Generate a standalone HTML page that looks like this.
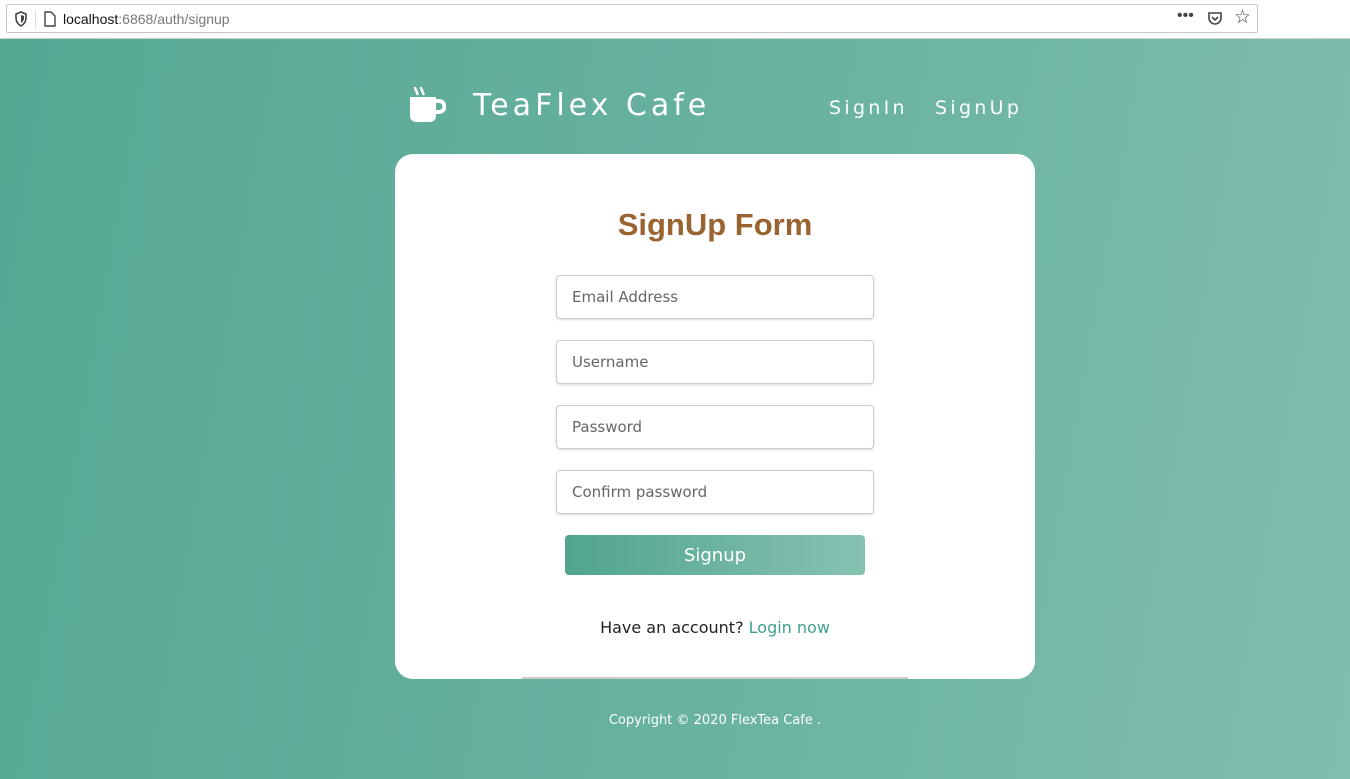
<!DOCTYPE html>
<html><head><meta charset="utf-8"><style>
*{margin:0;padding:0;box-sizing:border-box}
body{width:1350px;height:779px;overflow:hidden;font-family:"Liberation Sans",sans-serif;position:relative;background:#fff}
.bar{position:absolute;left:0;top:0;width:1350px;height:39px;background:#fff;border-bottom:1px solid #d0d0d0}
.url{position:absolute;left:6px;top:4px;width:1252px;height:29px;border:1px solid #c8c8c8;border-radius:2px;background:#fff}
.main{position:absolute;left:0;top:39px;width:1350px;height:740px;background:linear-gradient(100deg,#55a893 0%,#67b19f 50%,#80bfae 100%)}
.t{position:absolute;color:#fff;font-family:"DejaVu Sans","Liberation Sans",sans-serif}
.card{position:absolute;left:395px;top:154px;width:640px;height:525px;background:#fff;border-radius:18px}
.in{position:absolute;left:556px;width:318px;height:44px;border:1px solid #ccc;border-radius:4px;box-shadow:0 1px 2px rgba(0,0,0,.15);color:#666;padding:12px 15px;font-family:"DejaVu Sans",sans-serif;font-size:15px}
</style></head><body>
<div class="bar"><div class="url">
<svg style="position:absolute;left:7px;top:6px" width="14" height="16" viewBox="0 0 14 16"><path d="M7 1L2 3v4c0 4 2.5 6.5 5 8 2.5-1.5 5-4 5-8V3z" fill="none" stroke="#444" stroke-width="1.6"/><path d="M7 4v8c1.5-1 3-2.5 3-5V5z" fill="#444"/></svg>
<div style="position:absolute;left:28px;top:5px;width:1px;height:18px;background:#ddd"></div>
<svg style="position:absolute;left:36px;top:6px" width="14" height="16" viewBox="0 0 14 16"><path d="M2 1h6l4 4v10H2z" fill="none" stroke="#444" stroke-width="1.4"/></svg>
<div style="position:absolute;left:56px;top:6px;font-size:14px;color:#111">localhost<span style="color:#777">:6868/auth/signup</span></div>
<div style="position:absolute;left:1170px;top:2px;font-size:16px;color:#444">•••</div>
<svg style="position:absolute;left:1200px;top:6px" width="16" height="16" viewBox="0 0 16 16"><path d="M2 2h12v5a6 6 0 0 1-12 0z" fill="none" stroke="#444" stroke-width="1.6"/><path d="M5 6l3 3 3-3" fill="none" stroke="#444" stroke-width="1.6"/></svg>
<div style="position:absolute;left:1227px;top:1px;font-size:19px;color:#444">☆</div>
</div></div>
<div class="main"></div>
<svg style="position:absolute;left:409px;top:87px" width="37" height="37" viewBox="0 0 37 37"><path d="M6 1l2.5 6M12 1l2.5 6" stroke="#fff" stroke-width="2.4" fill="none" stroke-linecap="round"/><path d="M1 10h26v19a6 6 0 0 1-6 6H7a6 6 0 0 1-6-6z" fill="#fff"/><path d="M26 14h4a5.5 5.5 0 0 1 0 11h-4" stroke="#fff" stroke-width="4" fill="none"/></svg>
<div class="t" style="left:473px;top:88px;font-size:30px;letter-spacing:4px">TeaFlex Cafe</div>
<div class="t" style="left:829px;top:97px;font-size:19px;letter-spacing:3.3px">SignIn</div>
<div class="t" style="left:935px;top:97px;font-size:19px;letter-spacing:3.3px">SignUp</div>
<div class="card"></div>
<div style="position:absolute;left:395px;width:640px;top:207px;text-align:center;font-family:'Liberation Sans',sans-serif;font-size:31px;font-weight:bold;color:#9a6430">SignUp Form</div>
<div class="in" style="top:275px">Email Address</div>
<div class="in" style="top:340px">Username</div>
<div class="in" style="top:405px">Password</div>
<div class="in" style="top:470px">Confirm password</div>
<div style="position:absolute;left:565px;top:535px;width:300px;height:40px;border-radius:4px;background:linear-gradient(90deg,#51a48d,#86c3b2);color:#fff;text-align:center;line-height:41px;font-size:18px;font-family:'DejaVu Sans',sans-serif">Signup</div>
<div style="position:absolute;left:395px;width:640px;top:618px;text-align:center;font-size:16px;font-family:'DejaVu Sans',sans-serif;color:#222">Have an account? <span style="color:#3fa08a">Login now</span></div>
<div style="position:absolute;left:522px;top:677px;width:386px;height:2px;background:#ccc"></div>
<div class="t" style="left:0;width:1430px;text-align:center;top:713px;font-size:13px">Copyright © 2020 FlexTea Cafe .</div>
</body></html>
